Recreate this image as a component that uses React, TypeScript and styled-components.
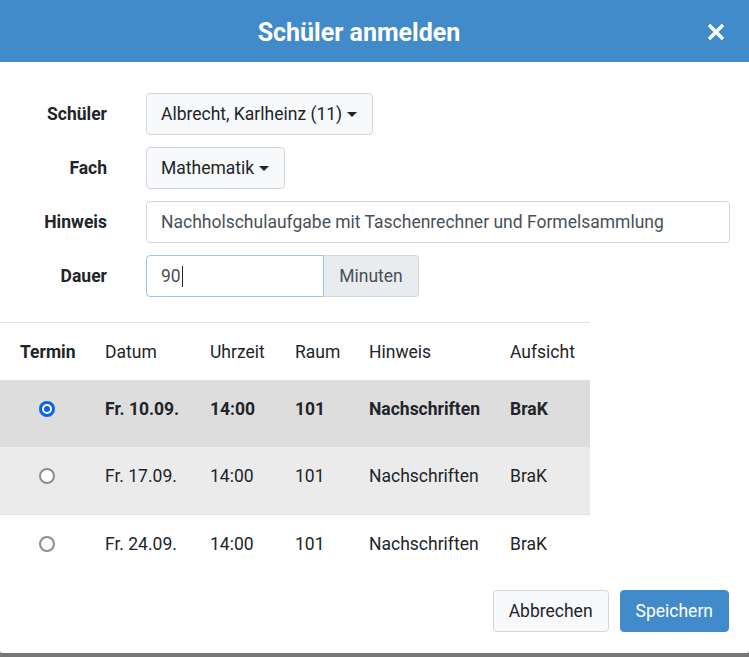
import React from "react";
import styled, { createGlobalStyle } from "styled-components";

const GlobalStyle = createGlobalStyle`
  html, body {
    margin: 0;
    padding: 0;
    background: #777777;
  }
  body {
    font-family: Roboto, "Liberation Sans", sans-serif;
    color: #212529;
  }
`;

type Slot = {
  date: string;
  time: string;
  room: string;
  note: string;
  supervisor: string;
  selected?: boolean;
  tone: "selected" | "striped" | "plain";
};

const slots: Slot[] = [
  { date: "Fr. 10.09.", time: "14:00", room: "101", note: "Nachschriften", supervisor: "BraK", selected: true, tone: "selected" },
  { date: "Fr. 17.09.", time: "14:00", room: "101", note: "Nachschriften", supervisor: "BraK", tone: "striped" },
  { date: "Fr. 24.09.", time: "14:00", room: "101", note: "Nachschriften", supervisor: "BraK", tone: "plain" },
];

const CloseIcon = () => (
  <svg width="20" height="20" viewBox="0 0 20 20">
    <path d="M3 3 L17 17 M17 3 L3 17" stroke="#fff" strokeWidth="3.4" strokeLinecap="butt" />
  </svg>
);

const App = () => {
  return (
    <>
      <GlobalStyle />
      <Modal>
        <Header>
          <Title>Schüler anmelden</Title>
          <CloseButton aria-label="Schließen">
            <CloseIcon />
          </CloseButton>
        </Header>
        <Form>
          <Label>Schüler</Label>
          <Field>
            <Dropdown>Albrecht, Karlheinz (11)<Caret /></Dropdown>
          </Field>
          <Label>Fach</Label>
          <Field>
            <Dropdown>Mathematik<Caret /></Dropdown>
          </Field>
          <Label>Hinweis</Label>
          <Field>
            <TextBox>Nachholschulaufgabe mit Taschenrechner und Formelsammlung</TextBox>
          </Field>
          <Label>Dauer</Label>
          <Field>
            <NumberBox>90<Cursor /></NumberBox>
            <Addon>Minuten</Addon>
          </Field>
        </Form>
        <Table>
          <colgroup>
            <col style={{ width: 91 }} />
            <col style={{ width: 105 }} />
            <col style={{ width: 85 }} />
            <col style={{ width: 74 }} />
            <col style={{ width: 141 }} />
            <col style={{ width: 94 }} />
          </colgroup>
          <thead>
            <tr>
              <Th $first>Termin</Th>
              <Th>Datum</Th>
              <Th>Uhrzeit</Th>
              <Th>Raum</Th>
              <Th>Hinweis</Th>
              <Th>Aufsicht</Th>
            </tr>
          </thead>
          <tbody>
            {slots.map((s) => (
              <Row key={s.date} $tone={s.tone}>
                <RadioCell>
                  <Radio $checked={!!s.selected} />
                </RadioCell>
                <Td $bold={!!s.selected}>{s.date}</Td>
                <Td $bold={!!s.selected}>{s.time}</Td>
                <Td $bold={!!s.selected}>{s.room}</Td>
                <Td $bold={!!s.selected}>{s.note}</Td>
                <Td $bold={!!s.selected}>{s.supervisor}</Td>
              </Row>
            ))}
          </tbody>
        </Table>
        <Footer>
          <Button $variant="light">Abbrechen</Button>
          <Button $variant="primary">Speichern</Button>
        </Footer>
      </Modal>
    </>
  );
};

export default App;

const Modal = styled.div`
  width: 749px;
  height: 653px;
  background: #fff;
  display: flex;
  flex-direction: column;
  border-bottom-left-radius: 2px;
  border-bottom-right-radius: 2px;
`;

const Header = styled.div`
  height: 62px;
  background: #428bca;
  display: flex;
  align-items: center;
  padding: 0 13px 0 22px;
  box-sizing: border-box;
`;

const Title = styled.div`
  flex: 1;
  text-align: center;
  color: #fff;
  font-size: 25px;
  font-weight: 700;
  padding-top: 2px;
`;

const CloseButton = styled.button`
  width: 40px;
  height: 40px;
  border: none;
  background: transparent;
  padding: 0;
  display: flex;
  align-items: center;
  justify-content: center;
  margin-top: 1px;
`;

const Form = styled.div`
  display: grid;
  grid-template-columns: 107px 1fr;
  column-gap: 39px;
  row-gap: 12px;
  padding: 31px 19px 0 0;
`;

const Label = styled.div`
  height: 42px;
  display: flex;
  align-items: center;
  justify-content: flex-end;
  font-size: 17.5px;
  font-weight: 700;
`;

const Field = styled.div`
  display: flex;
  align-items: stretch;
  height: 42px;
`;

const Dropdown = styled.div`
  display: flex;
  align-items: center;
  gap: 5px;
  padding: 0 15px 0 14px;
  background: #f8f9fa;
  border: 1px solid #d3d7db;
  border-radius: 4px;
  font-size: 17.5px;
  color: #212529;
`;

const Caret = styled.span`
  width: 0;
  height: 0;
  border-left: 5px solid transparent;
  border-right: 5px solid transparent;
  border-top: 5px solid #212529;
  margin-top: 1px;
`;

const TextBox = styled.div`
  flex: 1;
  display: flex;
  align-items: center;
  padding: 0 14px;
  border: 1px solid #d3d7db;
  border-radius: 4px;
  font-size: 17.5px;
  color: #495057;
`;

const NumberBox = styled.div`
  width: 178px;
  box-sizing: border-box;
  display: flex;
  align-items: center;
  padding: 0 14px;
  border: 1px solid #9cc4ec;
  border-radius: 4px 0 0 4px;
  font-size: 17.5px;
  color: #495057;
`;

const Cursor = styled.span`
  width: 1px;
  height: 21px;
  background: #212529;
  margin-left: 1px;
`;

const Addon = styled.div`
  width: 95px;
  box-sizing: border-box;
  display: flex;
  align-items: center;
  justify-content: center;
  background: #e9ecef;
  border: 1px solid #d3d7db;
  border-left: none;
  border-radius: 0 4px 4px 0;
  font-size: 17.5px;
  color: #495057;
`;

const Table = styled.table`
  width: 590px;
  margin-top: 25px;
  border-collapse: collapse;
  table-layout: fixed;
  font-size: 17.5px;
`;

const Th = styled.th<{ $first?: boolean }>`
  text-align: left;
  font-weight: ${(p) => (p.$first ? 700 : 400)};
  padding: 16px 0 14px ${(p) => (p.$first ? "20px" : "14px")};
  line-height: 27px;
  border-top: 1px solid #dee2e6;
  white-space: nowrap;
`;

const Row = styled.tr<{ $tone: "selected" | "striped" | "plain" }>`
  background: ${(p) =>
    p.$tone === "selected" ? "#dddddd" : p.$tone === "striped" ? "#ebebeb" : "#ffffff"};
  border-bottom: ${(p) => (p.$tone === "striped" ? "1px solid #dee2e6" : "none")};
`;

const Td = styled.td<{ $bold?: boolean }>`
  padding: 16px 0 24px 14px;
  line-height: 27px;
  vertical-align: top;
  font-weight: ${(p) => (p.$bold ? 700 : 400)};
  white-space: nowrap;
`;

const RadioCell = styled.td`
  padding: 16px 0 24px 0;
  height: 27px;
  vertical-align: top;
  text-align: center;
`;

const Radio = styled.span<{ $checked: boolean }>`
  display: inline-block;
  box-sizing: border-box;
  width: 16px;
  height: 16px;
  margin-top: 5px;
  margin-left: 2px;
  border-radius: 50%;
  ${(p) =>
    p.$checked
      ? `background: #0b63e5; box-shadow: inset 0 0 0 3px #0b63e5, inset 0 0 0 5px #fff;`
      : `background: #fff; border: 2px solid #8e8d95;`}
`;

const Footer = styled.div`
  margin-top: auto;
  display: flex;
  justify-content: flex-end;
  gap: 11px;
  padding: 0 20px 21px 0;
`;

const Button = styled.button<{ $variant: "light" | "primary" }>`
  height: 42px;
  padding: 0 15px;
  font-family: Roboto, "Liberation Sans", sans-serif;
  font-size: 17.5px;
  border-radius: 4px;
  border: 1px solid ${(p) => (p.$variant === "primary" ? "#428bca" : "#d3d7db")};
  background: ${(p) => (p.$variant === "primary" ? "#428bca" : "#f8f9fa")};
  color: ${(p) => (p.$variant === "primary" ? "#fff" : "#212529")};
`;
